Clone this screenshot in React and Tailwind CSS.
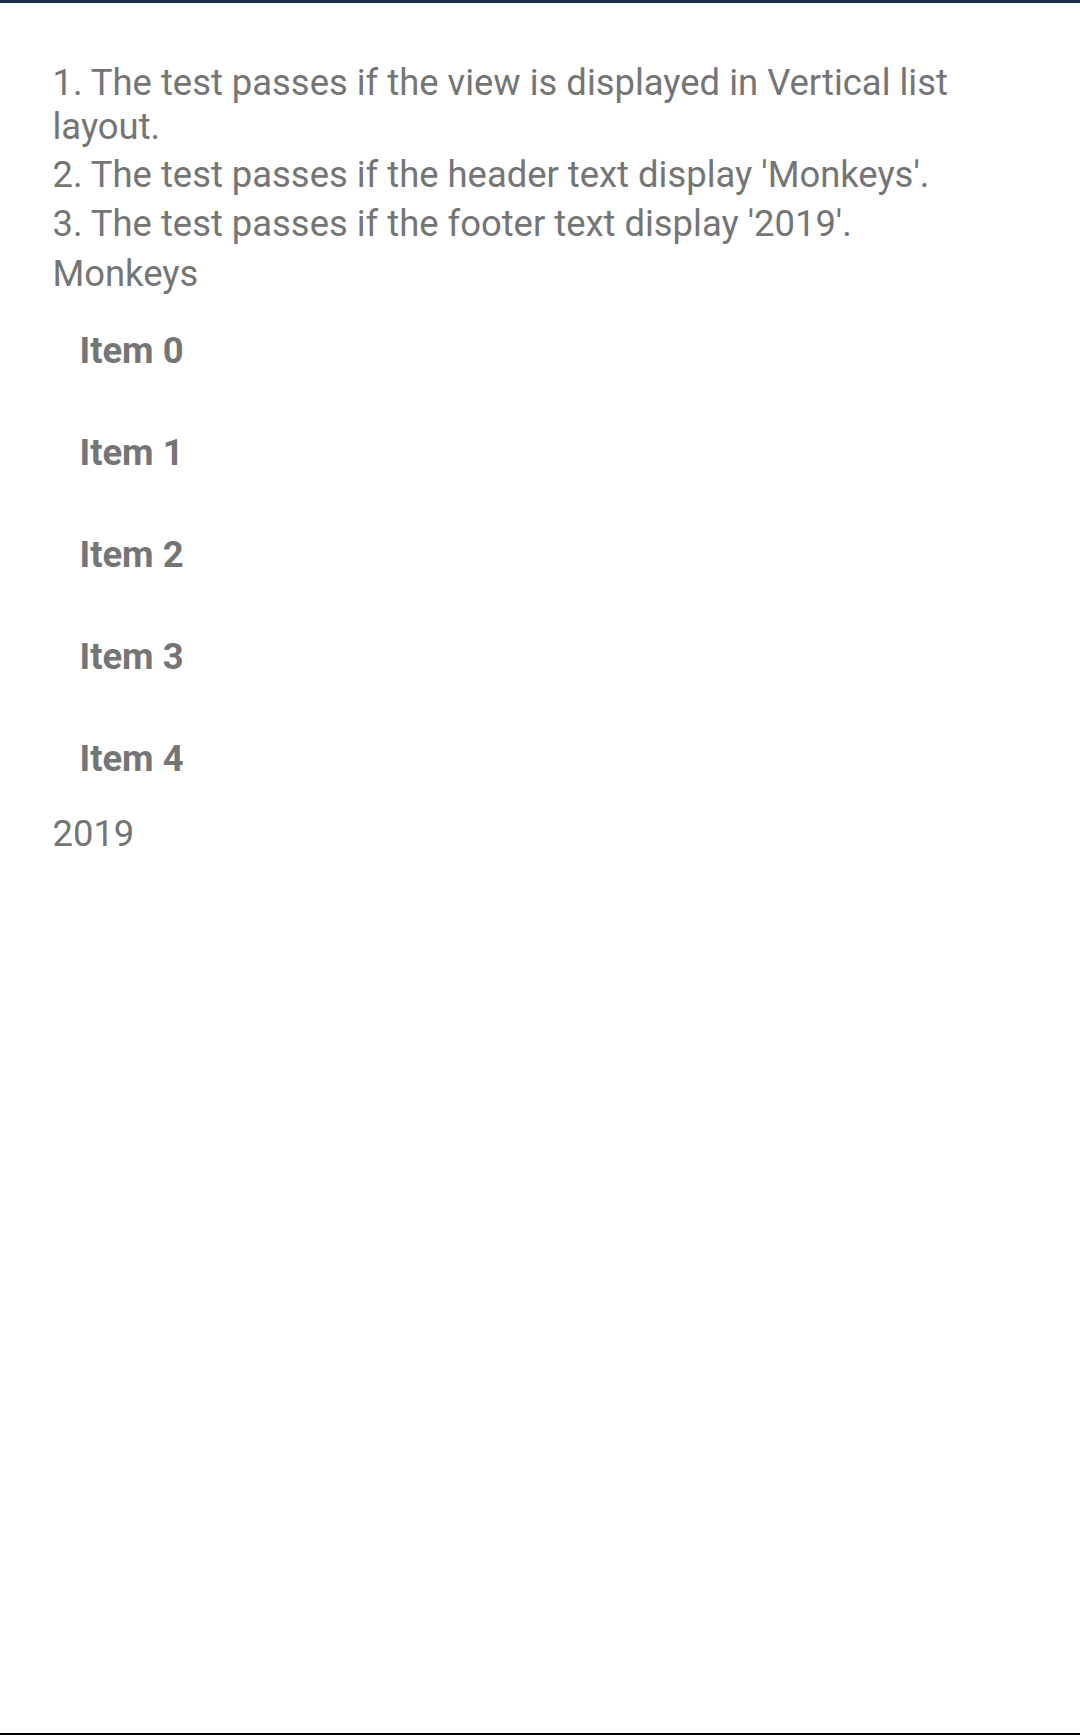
export default function App() {
  const items = [0, 1, 2, 3, 4];
  return (
    <div
      className="flex h-[1735px] w-[1080px] flex-col bg-white text-[#757575]"
      style={{ fontFamily: "Roboto, 'Noto Sans', sans-serif" }}
    >
      <div className="h-[3px] w-full bg-[#1d3048]" />
      <div className="flex-1 pl-[52.5px] pr-[52.5px] pt-[58px] text-[36.4px] leading-[43.5px]">
        <p>1. The test passes if the view is displayed in Vertical list layout.</p>
        <p className="mt-[5px]">2. The test passes if the header text display 'Monkeys'.</p>
        <p className="mt-[5px]">3. The test passes if the footer text display '2019'.</p>
        <p className="mt-[7px]">Monkeys</p>
        <ul>
          {items.map((i) => (
            <li key={i} className="h-[102px] pl-[27px] pt-[33px] font-bold">
              Item {i}
            </li>
          ))}
        </ul>
        <p className="mt-[6px]">2019</p>
      </div>
      <div className="h-[2px] w-full bg-black" />
    </div>
  );
}
